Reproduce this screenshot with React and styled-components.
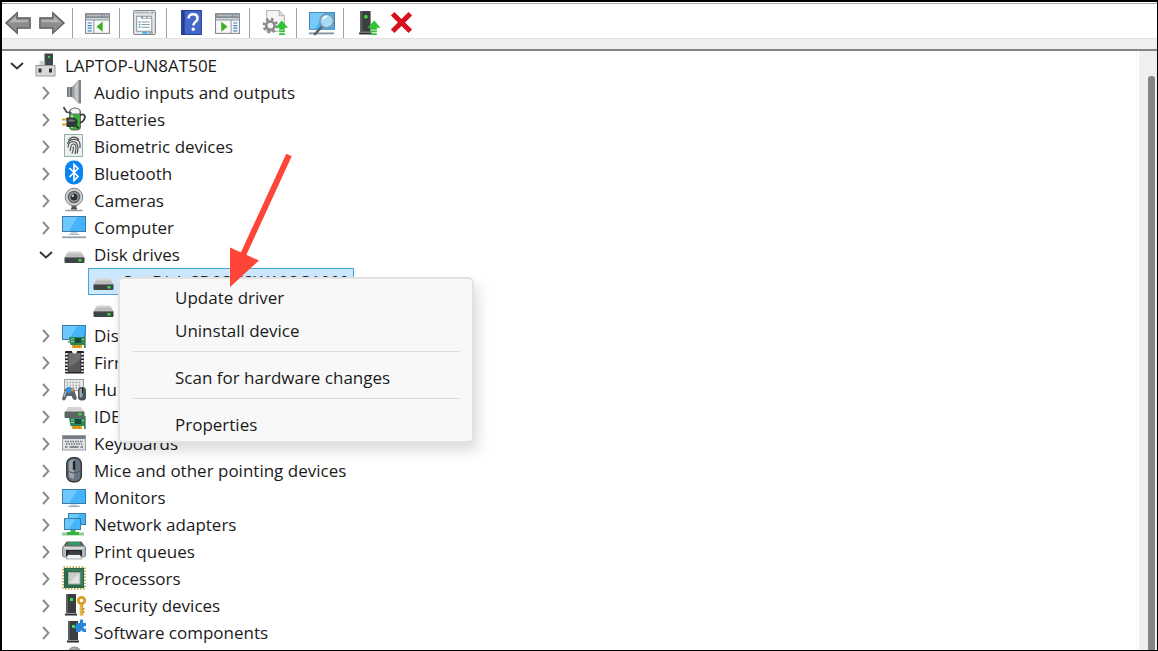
import { useState } from 'react';
import styled, { createGlobalStyle } from 'styled-components';

const GlobalStyle = createGlobalStyle`
  * {
    box-sizing: border-box;
  }
  body {
    margin: 0;
    background: #fff;
    color: #1b1b1b;
    font-family: 'Open Sans', 'Noto Sans', sans-serif;
    font-size: 17px;
  }
  button {
    font: inherit;
    color: inherit;
    border: 0;
    padding: 0;
    background: none;
  }
  ul {
    list-style: none;
    margin: 0;
    padding: 0;
  }
  svg {
    display: block;
  }
`;

const Window = styled.div`
  display: flex;
  flex-direction: column;
  height: 100vh;
  padding-top: 1px;
  overflow: hidden;
  border: solid #000;
  border-width: 2px 1px 1px 2px;
`;

const Toolbar = styled.div`
  display: flex;
  align-items: center;
  flex: none;
  height: 35px;
  border-top: 1px solid #a8a8a8;
`;

const ToolButton = styled.button`
  display: flex;
  align-items: center;
  justify-content: center;
  width: ${(props) => (props.$nav ? 34 : 36)}px;
  height: 34px;
  padding-top: 4px;
  &:first-child {
    margin-left: -1px;
  }
`;

const Separator = styled.div`
  width: 1px;
  height: 30px;
  margin: 3px 7px 0 3px;
  background: #a3a3a3;
`;

const Band = styled.div`
  flex: none;
  height: 13px;
  background: #efefef;
  border-top: 1px solid #e2e2e2;
  border-bottom: 2px solid #848484;
`;

const Content = styled.div`
  display: flex;
  flex: 1;
  min-height: 0;
`;

const TreePane = styled.div`
  position: relative;
  flex: 1;
  padding-top: 1px;
  overflow: hidden;
  border-right: 1px solid #f5f5f5;
`;

const ScrollTrack = styled.div`
  display: flex;
  justify-content: flex-end;
  width: 18px;
  margin-left: 2px;
  padding: 25px 2px 0 0;
  background: #efefef;
`;

const ScrollThumb = styled.div`
  width: 7px;
  background: #858585;
  border-radius: 3px 3px 0 0;
`;

const Row = styled.li`
  display: flex;
  align-items: center;
  height: 27px;
  padding-left: ${(props) => props.$level * 29 + 3}px;
`;

const Toggle = styled.button`
  display: flex;
  align-items: center;
  justify-content: center;
  width: 24px;
  height: 27px;
`;

const Spacer = styled.span`
  width: 24px;
`;

const Node = styled.span`
  display: flex;
  align-items: center;
  gap: 8px;
  height: 27px;
  margin-left: 1px;
  padding: 0 4px 0 3px;
  white-space: nowrap;
  background: ${(props) => (props.$selected ? '#cce8ff' : 'transparent')};
  box-shadow: ${(props) => (props.$selected ? 'inset 0 0 0 1px #4ba3dc' : 'none')};
`;

const Menu = styled.ul`
  position: absolute;
  top: 226px;
  left: 116px;
  width: 356px;
  padding: 2px 0 0;
  background: #f8f8f8;
  border: 2px solid #e2e2e2;
  border-radius: 6px;
  box-shadow: 4px 8px 14px rgba(0, 0, 0, 0.14);
`;

const MenuItem = styled.button`
  display: block;
  width: 100%;
  height: 33px;
  padding-left: 55px;
  text-align: left;
`;

const MenuLine = styled.li`
  height: 1px;
  margin: 4px 12px 9px 13px;
  background: #dcdcdc;
`;

const Pointer = styled.svg`
  position: absolute;
  top: 100px;
  left: 226px;
`;

/* small drawing parts shared by several icons */

const Screen = ({ x, y, w, h }) => (
  <g>
    <rect x={x + 0.5} y={y + 0.5} width={w - 1} height={h - 1} fill="#45b4fa" stroke="#3a7ca5" />
    <path d={`M${x + 1} ${y + 1}h${w * 0.6}l${-w * 0.35} ${h - 2}H${x + 1}z`} fill="#7fd0ff" opacity="0.7" />
  </g>
);

const Drive = ({ y = 0 }) => (
  <g transform={`translate(0 ${y})`}>
    <path d="M6 10.5h13l3.5 6h-20z" fill="#d4d4d4" />
    <path d="M5 12.5h15l2.5 4h-20z" fill="#bdbdbd" />
    <rect x="2.500" y="16" width="20" height="6" rx="1" fill="#3f4444" />
    <path d="M3 16.5h19" stroke="#777" />
    <rect x="16.500" y="18" width="3" height="2.500" fill="#35e03c" />
  </g>
);

const Card = () => (
  <g>
    <path d="M7 15h15v-2h2v13h-2v-3H8.500z" fill="#2e8555" />
    <path d="M23.500 13v13" stroke="#8f9a93" />
    <rect x="10" y="23" width="10" height="3" fill="#e8a11c" />
    <path d="M12.500 23v3M15 23v3M17.500 23v3" stroke="#b87a10" strokeWidth="0.6" />
    <rect x="13" y="16" width="6" height="5" fill="#1b4a36" />
    <path d="M9 17h3M9 19.500h3M20 17.500h2" stroke="#8fd9a8" />
  </g>
);

const Tower = ({ x, y, h = 21 }) => (
  <g transform={`translate(${x} ${y})`}>
    <path d={`M0 0h10v${h - 2}H0z`} fill="#3b3e40" />
    <path d={`M0 0h2v${h - 2}H0z`} fill="#5c6062" />
    <path d={`M-1 ${h - 1.5}h12v2H-1z`} fill="#2b2d2e" />
    <rect x="4" y="4" width="3" height="3" fill="#39ea3c" />
  </g>
);

const icons = {
  root: (
    <g>
      <rect x="11.500" y="1.500" width="8.500" height="13" fill="#3c4846" />
      <rect x="15" y="4" width="2" height="2" fill="#40c95a" />
      <path d="M7 9h4.500v5H6z" fill="#cfcfcf" />
      <rect x="3" y="13.500" width="19" height="10.500" fill="#d9d9d9" stroke="#9a9a9a" />
      <rect x="5.500" y="16.500" width="3" height="4" fill="#333" />
      <rect x="16" y="16.500" width="3" height="4" fill="#333" />
    </g>
  ),
  audio: (
    <g>
      <path d="M5 8h5v10H5z" fill="#6d7173" />
      <path d="M6.500 8h1.500v10H6.500z" fill="#a5a9ab" />
      <path d="M10 8l6.500-7v23.500L10 18z" fill="#9a9da0" />
      <path d="M12.500 7l4-6v23.500l-4-5z" fill="#c4c6c8" />
      <path d="M16.500 1H19v23.500h-2.500z" fill="#808486" />
    </g>
  ),
  battery: (
    <g>
      <rect x="7.500" y="3" width="11" height="21" rx="3" fill="#37ae3c" stroke="#687068" />
      <path d="M8 6q0-3.500 5-4 5.500.5 5 4v2H8z" fill="#f2f6f2" stroke="#6d726d" />
      <path d="M10 9v13" stroke="#9af09b" strokeWidth="2" />
      <path d="M18 9c5-2 6 2 3.500 5.500-1.500 2-2 2-3.500 2" fill="none" stroke="#343a34" strokeWidth="1.800" />
      <path d="M1.500 1l3 5 5 1" fill="none" stroke="#404744" strokeWidth="1.700" />
      <path d="M0 13.500h6M0 18.500h6" stroke="#d6aa2d" strokeWidth="2" />
      <path d="M4.500 11.500h5c4 0 6 1.500 6 4.500s-2 5-6 5h-5z" fill="#343838" />
      <path d="M6.500 13.500h4c2 0 2.500 1 2.500 2h-6.500z" fill="#777d7b" />
      <path d="M13 19l4 3.500" stroke="#343838" strokeWidth="2" />
    </g>
  ),
  biometric: (
    <g>
      <rect x="2.500" y="1.500" width="18" height="22" fill="#eef0ef" stroke="#8fb3a6" />
      <g fill="none" stroke="#4e5553" strokeWidth="1.200">
        <path d="M6.500 7.500c2.500-4.500 8-4.500 10.500-.5" />
        <path d="M5.500 11c1.500-6 11.500-6.500 12.500 0v4" />
        <path d="M6 14.500c.5-7.500 9-8 10 0 0 3-.5 4.500-1 6" />
        <path d="M8 18c1-2 0-7 3.500-7s2.500 6 1.500 10" />
        <path d="M11.300 13.500c.5 3-.3 5-1.300 7" />
      </g>
    </g>
  ),
  bluetooth: (
    <g>
      <rect x="3" y="0.500" width="18" height="24" rx="8.500" fill="#0a84f2" />
      <path d="M7.500 8l8.500 8.500-4 4V4.500l4 4L7.500 17" fill="none" stroke="#fff" strokeWidth="1.700" />
    </g>
  ),
  camera: (
    <g>
      <path d="M9.500 18h5v4h-5z" fill="#565656" />
      <path d="M3.500 23.500h17" stroke="#9b9b9b" strokeWidth="1.500" />
      <path d="M9 21.800h6" stroke="#555" strokeWidth="1.500" />
      <circle cx="12" cy="10" r="8.800" fill="#d0d0d0" stroke="#858585" />
      <circle cx="12" cy="10" r="6.300" fill="#606468" />
      <circle cx="12" cy="10" r="4.800" fill="#9ba0a5" />
      <circle cx="12" cy="10" r="3.500" fill="#2b3035" />
      <circle cx="10.800" cy="8.700" r="1.200" fill="#c7d2da" />
    </g>
  ),
  computer: (
    <g>
      <Screen x={0} y={2} w={24} h={16} />
      <path d="M9 18h6l1 2H8z" fill="#c7d3dc" />
      <path d="M7 20.500h10" stroke="#a9bac6" />
      <path d="M0 23.300h24" stroke="#8fa2b0" strokeWidth="1.800" />
    </g>
  ),
  disk: <Drive />,
  display: (
    <g>
      <Screen x={0} y={3} w={24} h={15} />
      <path d="M6 20h6" stroke="#8fa2b0" strokeWidth="2" />
      <Card />
    </g>
  ),
  firmware: (
    <g>
      <rect x="3" y="2" width="19" height="22.500" rx="1" fill="#262626" />
      <path d="M4.500 4v19M20.500 4v19" stroke="#e8e8e8" strokeWidth="2.500" strokeDasharray="2 1.500" />
      <rect x="6.500" y="4" width="12" height="19" fill="#585858" />
      <path d="M6.500 4h12v6l-12 9z" fill="#707070" />
      <path d="M10 2a2.500 2.500 0 0 0 5 0z" fill="#fff" />
    </g>
  ),
  hid: (
    <g>
      <rect x="2.500" y="3.500" width="19" height="11" fill="#e6e8e9" stroke="#9a9fa2" />
      <path d="M4.500 6.500h15M4.500 9.500h15M4.500 12h15" stroke="#a0a5a9" strokeWidth="1.500" strokeDasharray="1.500 1.500" />
      <path d="M3 13q5-2.500 9 0l3 9.500q-3 4-5.500-2.500H5q-2.500 7-5 3z" fill="#59646b" />
      <circle cx="7" cy="14" r="3" fill="#2f91e6" />
      <circle cx="10.500" cy="14" r="1.500" fill="#ef8b33" />
      <path d="M2 21l2-6" stroke="#a5b1b8" strokeWidth="1.500" />
      <rect x="16" y="11" width="8" height="13.500" rx="3.500" fill="#4c565d" />
      <rect x="17.500" y="12.500" width="3" height="9" rx="1.500" fill="#9ba6ad" />
      <path d="M20.500 12v5" stroke="#20262a" />
    </g>
  ),
  ide: (
    <g>
      <path d="M6 4h13l3 5H3z" fill="#d4d4d4" />
      <rect x="2.500" y="8.500" width="20" height="6.500" rx="1" fill="#5e6464" />
      <path d="M3 8.500h19" stroke="#a0a0a0" />
      <rect x="16.500" y="10" width="3" height="2.500" fill="#35e03c" />
      <Card />
    </g>
  ),
  keyboard: (
    <g>
      <rect x="0.500" y="5.500" width="23" height="14.500" fill="#dfe2e4" stroke="#9a9ea1" />
      <rect x="1" y="6" width="22" height="3" fill="#777d82" />
      <path d="M3 11.500h18M4 14h16" stroke="#6c7276" strokeWidth="1.500" strokeDasharray="1.500 1" />
      <path d="M3 17h2.500M7.500 17h9M18.500 17H21" stroke="#6c7276" strokeWidth="1.500" />
    </g>
  ),
  mouse: (
    <g>
      <rect x="4.800" y="0.800" width="14.500" height="24" rx="6" fill="#68737d" stroke="#33393e" strokeWidth="1.500" />
      <path d="M7 7q0-4 5-4.500v19Q7 22 7 17z" fill="#9aa5ae" />
      <path d="M6 14.500q6 3 12 0" fill="none" stroke="#48525a" />
      <rect x="10.800" y="4" width="2.500" height="9" rx="1" fill="#22282d" />
    </g>
  ),
  monitor: (
    <g>
      <Screen x={0} y={5} w={24} h={15} />
      <path d="M9 20.500h6v1H9z" fill="#b7c5cf" />
      <path d="M6.500 22.300h11" stroke="#92a6b3" strokeWidth="1.300" />
    </g>
  ),
  network: (
    <g>
      <Screen x={6} y={2} w={18} h={12} />
      <Screen x={2} y={7} w={17} h={12} />
      <path d="M8.500 19h5v3h-5z" fill="#3dae49" />
      <path d="M0 23h22" stroke="#8fcf95" strokeWidth="3" />
      <path d="M5 22.500h12" stroke="#35b443" strokeWidth="3" />
    </g>
  ),
  printer: (
    <g>
      <path d="M4.500 3.500h15l3.500 5H1z" fill="#596064" />
      <path d="M6.500 4h11l1 3H5.500z" fill="#2d9a62" />
      <rect x="0.500" y="8" width="23" height="11" rx="2" fill="#b3b8bb" stroke="#7d8386" />
      <path d="M2 10h20" stroke="#e0e3e4" strokeWidth="1.500" />
      <path d="M4 12h16v6H4z" fill="#25282a" />
      <path d="M6.500 16h11l2.500 5H4z" fill="#f1f3f4" stroke="#8a8f92" strokeWidth="0.700" />
      <path d="M7 13h10l.8 4H6.200z" fill="#3c4144" />
    </g>
  ),
  processor: (
    <g>
      <rect x="1.500" y="2.500" width="21" height="21" fill="none" stroke="#c2a553" strokeWidth="2.500" strokeDasharray="1.500 1.500" />
      <rect x="2" y="3" width="20" height="20" fill="#2a6a4b" />
      <path d="M4 5h16v16" fill="none" stroke="#4b8f6e" />
      <rect x="6.500" y="7.500" width="11.500" height="11.500" fill="#dfe3e1" stroke="#a4aba7" />
      <path d="M7 8h10.500L7 18.500z" fill="#c8cecb" />
    </g>
  ),
  security: (
    <g>
      <Tower x={4} y={2} />
      <circle cx="19.500" cy="8.500" r="3.200" fill="none" stroke="#d99c28" strokeWidth="2.800" />
      <path d="M19.500 12.500v11" stroke="#d99c28" strokeWidth="3.500" />
      <path d="M19 13v10" stroke="#f4cf72" />
      <path d="M21 17h1.500M21 20h1.500" stroke="#b97e17" strokeWidth="1.500" />
    </g>
  ),
  software: (
    <g>
      <Tower x={6} y={2} />
      <path d="M14 4h4c-1.500-5 4.500-5 3 0h3v3.500c-1.500-1-2.500 0-2.500 1s1 2 2.500 1V13h-3.500c.5-2-2.500-2-2 0H14V9.500c-2.500.5-2.500-3 0-2.500z" fill="#2586dc" />
    </g>
  ),
  device: (
    <g>
      <circle cx="12.500" cy="8" r="7" fill="#a9a9a9" stroke="#8a8a8a" />
    </g>
  ),
};

const toolIcons = {
  back: (
    <g>
      <path d="M.8 12.500l11-10v5h12.400v10H11.800v5z" fill="#8d8d8d" stroke="#5a5a5a" strokeWidth="1.200" />
      <path d="M4 12l6.500-6v3.500H22v2z" fill="#b4b4b4" />
    </g>
  ),
  forward: (
    <g>
      <path d="M24.200 12.500l-11-10v5H.8v10h12.400v5z" fill="#8d8d8d" stroke="#5a5a5a" strokeWidth="1.200" />
      <path d="M21 12l-6.500-6v3.500H2.500v2z" fill="#b4b4b4" />
    </g>
  ),
  console: (
    <g>
      <rect x="0.500" y="3.500" width="23" height="19" fill="#f8f9fa" stroke="#80868c" />
      <path d="M1 4h22v4H1z" fill="#858b92" />
      <path d="M2 5.500h14" stroke="#c6cbd0" />
      <path d="M17.500 5.500h1M19.500 5.500h1M21.500 5.500h1" stroke="#fff" />
      <path d="M1 9.500h22M8.500 10v12" stroke="#9299a0" />
      <path d="M2.500 12.500h4M2.500 15h4M2.500 17.500h4M2.500 20h4" stroke="#3f7fc6" strokeWidth="1.200" />
      <path d="M17 11v10l-6-5z" fill="#3eae22" />
    </g>
  ),
  properties: (
    <g>
      <rect x="1.500" y="0.500" width="21" height="23" rx="1.500" fill="#e3e6e8" stroke="#7f8589" />
      <path d="M3 2.500h14" stroke="#aeb3b7" strokeWidth="1.500" />
      <path d="M18.500 1.500l2 2M20.500 1.500l-2 2" stroke="#6c7276" strokeWidth="0.800" />
      <path d="M4.500 9.500V6h4.500v2h10v12.500H4.500z" fill="#fff" stroke="#8e959b" />
      <path d="M10 8V6h4v2M14.500 8V6h4v2" fill="#f5f5f5" stroke="#8e959b" />
      <path d="M9 11.500h8M9 14h8M9 16.500h8" stroke="#8f989f" />
      <path d="M6.500 11.500H8M6.500 14H8M6.500 16.500H8" stroke="#2b9bd8" strokeWidth="1.500" />
      <path d="M10 21.800h5" stroke="#24b5eb" strokeWidth="2" />
      <path d="M16 21.800h4" stroke="#9aa3a8" strokeWidth="2" />
    </g>
  ),
  help: (
    <g>
      <rect x="2.500" y="0.500" width="19" height="23" fill="#4468ca" stroke="#243d93" />
      <path d="M3 1h2.500v22.500H3z" fill="#243d93" />
      <path
        d="M9.200 8.200c0-2.500 1.700-4 4.300-4s4.300 1.500 4.300 3.900c0 3.400-4 3.300-4 6.700"
        fill="none"
        stroke="#fff"
        strokeWidth="2.400"
      />
      <circle cx="13.700" cy="18.500" r="1.600" fill="#fff" />
    </g>
  ),
  action: (
    <g>
      <rect x="0.500" y="3.500" width="23" height="19" fill="#f8f9fa" stroke="#80868c" />
      <path d="M1 4h22v4H1z" fill="#858b92" />
      <path d="M2 5.500h14" stroke="#c6cbd0" />
      <path d="M17.500 5.500h1M19.500 5.500h1M21.500 5.500h1" stroke="#fff" />
      <path d="M1 9.500h22M15.500 10v12" stroke="#9299a0" />
      <path d="M17.500 12.500h4M17.500 15h4M17.500 17.500h4M17.500 20h4" stroke="#3f7fc6" strokeWidth="1.200" />
      <path d="M6 11v10l6-5z" fill="#3eae22" />
    </g>
  ),
  update: (
    <g>
      <path d="M4.500.5h12l5 5v15h-17z" fill="#f4f4f4" stroke="#b5b5b5" />
      <path d="M16.500.5v5h5" fill="#ddd" stroke="#b5b5b5" />
      <circle cx="8" cy="15" r="6" fill="none" stroke="#8b8b8b" strokeWidth="3" strokeDasharray="2.400 2.300" />
      <circle cx="8" cy="15" r="4" fill="#f4f4f4" stroke="#8b8b8b" strokeWidth="2.500" />
      <path d="M19 10l6 7h-3.500v2h-5v-2H13z" fill="#30c435" />
      <path d="M16.500 20.500h5.500M16.500 23.300h5.500" stroke="#30c435" strokeWidth="1.700" />
    </g>
  ),
  scan: (
    <g>
      <rect x="0.500" y="2.500" width="24" height="16" fill="#4bb3f4" stroke="#3b86b7" />
      <path d="M1 3h14L6 18H1z" fill="#78c9f9" />
      <path d="M0 22.500h24" stroke="#8399a8" strokeWidth="1.800" />
      <path d="M12.500 16L5 24" stroke="#58666f" strokeWidth="2.500" />
      <circle cx="17" cy="10.500" r="6.500" fill="#b9e2f8" fillOpacity="0.850" stroke="#7e99aa" strokeWidth="1.500" />
      <path d="M13.500 9q1-3 4-3" fill="none" stroke="#fff" strokeWidth="1.500" />
    </g>
  ),
  enable: (
    <g>
      <Tower x={5} y={1} h={22} />
      <path d="M18.500 10l6 7H21v2h-6v-2h-3z" fill="#30c435" />
      <path d="M15 20.500h6M15 23.300h6" stroke="#30c435" strokeWidth="1.700" />
    </g>
  ),
  remove: <path d="M3.500 3.500l17 17M20.500 3.500l-17 17" stroke="#d70f1f" strokeWidth="4.800" />,
};

const toolbar = [
  { icon: 'back', label: 'Back', nav: true },
  { icon: 'forward', label: 'Forward', nav: true },
  null,
  { icon: 'console', label: 'Show/Hide Console Tree' },
  null,
  { icon: 'properties', label: 'Properties' },
  null,
  { icon: 'help', label: 'Help' },
  { icon: 'action', label: 'Show/Hide Action Pane' },
  null,
  { icon: 'update', label: 'Update device driver' },
  null,
  { icon: 'scan', label: 'Scan for hardware changes' },
  null,
  { icon: 'enable', label: 'Enable device', nav: true },
  { icon: 'remove', label: 'Uninstall device', nav: true },
];

const devices = [
  { icon: 'root', label: 'LAPTOP-UN8AT50E', level: 0, open: true },
  { icon: 'audio', label: 'Audio inputs and outputs', level: 1 },
  { icon: 'battery', label: 'Batteries', level: 1 },
  { icon: 'biometric', label: 'Biometric devices', level: 1 },
  { icon: 'bluetooth', label: 'Bluetooth', level: 1 },
  { icon: 'camera', label: 'Cameras', level: 1 },
  { icon: 'computer', label: 'Computer', level: 1 },
  { icon: 'disk', label: 'Disk drives', level: 1, open: true },
  { icon: 'disk', label: 'SanDisk SD9SN8W128G1002', level: 2 },
  { icon: 'disk', label: 'Disk drive', level: 2 },
  { icon: 'display', label: 'Display adapters', level: 1 },
  { icon: 'firmware', label: 'Firmware', level: 1 },
  { icon: 'hid', label: 'Human Interface Devices', level: 1 },
  { icon: 'ide', label: 'IDE ATA/ATAPI controllers', level: 1 },
  { icon: 'keyboard', label: 'Keyboards', level: 1 },
  { icon: 'mouse', label: 'Mice and other pointing devices', level: 1 },
  { icon: 'monitor', label: 'Monitors', level: 1 },
  { icon: 'network', label: 'Network adapters', level: 1 },
  { icon: 'printer', label: 'Print queues', level: 1 },
  { icon: 'processor', label: 'Processors', level: 1 },
  { icon: 'security', label: 'Security devices', level: 1 },
  { icon: 'software', label: 'Software components', level: 1 },
  { icon: 'device', label: 'Software devices', level: 1 },
];

const Chevron = ({ open }) => (
  <svg width="14" height="14" viewBox="0 0 14 14" fill="none" strokeWidth="1.900">
    {open ? <path d="M1 4l6 5.500L13 4" stroke="#333" /> : <path d="M4 1l5.500 6L4 13" stroke="#8a8a8a" />}
  </svg>
);

const DeviceRow = ({ device, selected, onSelect }) => (
  <Row $level={device.level}>
    {device.level < 2 ? (
      <Toggle aria-label={`Toggle ${device.label}`} aria-expanded={!!device.open}>
        <Chevron open={device.open} />
      </Toggle>
    ) : (
      <Spacer />
    )}
    <Node $selected={selected} onClick={onSelect}>
      <svg width="24" height="27" viewBox="0 0 24 27">
        {icons[device.icon]}
      </svg>
      {device.label}
    </Node>
  </Row>
);

const App = () => {
  const [selected, setSelected] = useState(8);

  return (
    <Window>
      <GlobalStyle />
      <Toolbar>
        {toolbar.map((tool, i) =>
          tool ? (
            <ToolButton key={i} $nav={tool.nav} aria-label={tool.label}>
              <svg width="26" height="26" viewBox="0 0 25 25">
                {toolIcons[tool.icon]}
              </svg>
            </ToolButton>
          ) : (
            <Separator key={i} />
          )
        )}
      </Toolbar>
      <Band />
      <Content>
        <TreePane>
          <ul>
            {devices.map((device, i) => (
              <DeviceRow key={i} device={device} selected={selected === i} onSelect={() => setSelected(i)} />
            ))}
          </ul>
          <Menu>
            <li>
              <MenuItem>Update driver</MenuItem>
            </li>
            <li>
              <MenuItem>Uninstall device</MenuItem>
            </li>
            <MenuLine />
            <li>
              <MenuItem>Scan for hardware changes</MenuItem>
            </li>
            <MenuLine />
            <li>
              <MenuItem>Properties</MenuItem>
            </li>
          </Menu>
          <Pointer width="68" height="140" viewBox="0 0 68 140">
            <path d="M61 4L15 104" stroke="#ff4438" strokeWidth="6" />
            <path d="M2 96.500L31 109.500 2 136z" fill="#ff4438" />
          </Pointer>
        </TreePane>
        <ScrollTrack>
          <ScrollThumb />
        </ScrollTrack>
      </Content>
    </Window>
  );
};

export default App;
